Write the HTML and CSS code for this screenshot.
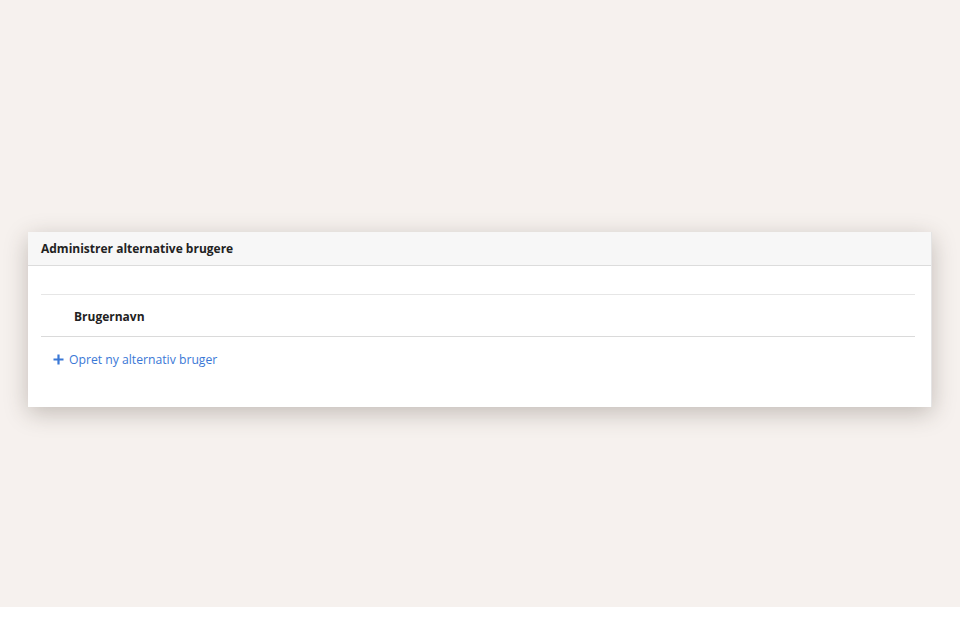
FILE: index.html
```html
<!DOCTYPE html>
<html>
<head>
<meta charset="utf-8">
<link rel="stylesheet" href="styles.css">
</head>
<body>
<div class="page">
  <div class="card">
    <div class="card-header">Administrer alternative brugere</div>
    <div class="card-body">
      <div class="table">
        <div class="th-row"><span class="th">Brugernavn</span></div>
      </div>
      <a class="add-link" href="#">
        <svg class="plus" width="11" height="11" viewBox="0 0 11 11"><path d="M5.5 0.5v10M0.5 5.5h10" stroke="#3a78d6" stroke-width="2.2" fill="none"/></svg>
        <span>Opret ny alternativ bruger</span>
      </a>
    </div>
  </div>
</div>
</body>
</html>
```
FILE: styles.css
```css
html, body {
  margin: 0;
  padding: 0;
  background: #ffffff;
  font-family: "Open Sans", "Noto Sans", sans-serif;
}
.page {
  height: 607px;
  background: #f6f1ee;
  padding-top: 232px;
  padding-left: 28px;
  box-sizing: border-box;
}
.card {
  width: 904px;
  height: 175px;
  background: #ffffff;
  box-shadow: 0 6px 22px rgba(60, 50, 40, 0.28);
  border-right: 1px solid #e4e4e4;
  box-sizing: border-box;
}
.card-header {
  height: 34px;
  background: #f7f7f7;
  border-bottom: 1px solid #dcdcdc;
  box-sizing: border-box;
  padding-left: 13px;
  display: flex;
  align-items: center;
  font-size: 12px;
  font-weight: 700;
  color: #222;
}
.card-body {
  padding: 28px 16px 0 13px;
}
.table {
  border-top: 1px solid #e6e6e6;
  border-bottom: 1px solid #dadada;
}
.th-row {
  height: 41px;
  box-sizing: border-box;
  padding-top: 2px;
  display: flex;
  align-items: center;
  padding-left: 33px;
}
.th {
  font-size: 12px;
  font-weight: 700;
  color: #222;
}
.add-link {
  display: flex;
  align-items: center;
  gap: 5px;
  margin-top: 14px;
  padding-left: 12px;
  color: #3a78d6;
  text-decoration: none;
  font-size: 12.2px;
}
.plus {
  display: block;
}
```
